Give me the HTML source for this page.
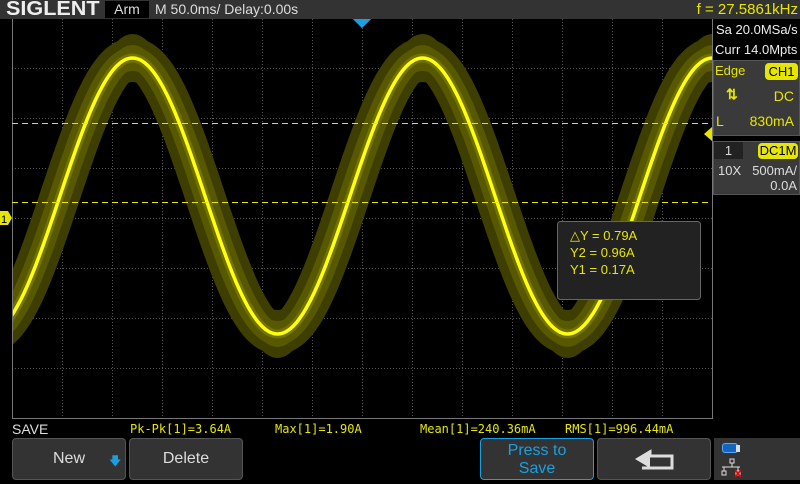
<!DOCTYPE html>
<html><head><meta charset="utf-8"><style>
*{margin:0;padding:0;box-sizing:border-box}
body{width:800px;height:480px;background:#000;overflow:hidden;position:relative;font-family:"Liberation Sans",sans-serif}
.a{position:absolute}
.top{left:0;top:0;width:800px;height:19px;background:#333}
.btn{position:absolute;top:438px;height:42px;background:#333;border:1px solid #555;border-radius:4px;color:#ddd;font-size:16px;text-align:center}
.y{color:#e6e600}
</style></head><body>
<div class="a top"></div>
<div class="a" style="left:6px;top:-2px;font-size:20px;font-weight:bold;color:#eee;line-height:22px;transform:scaleX(1.08);transform-origin:left">SIGLENT</div>
<div class="a" style="left:105px;top:1px;width:44px;height:17px;background:#000;color:#ddd;font-size:14px;text-align:center;line-height:17px">Arm</div>
<div class="a" style="left:155px;top:1px;color:#ddd;font-size:14px;line-height:17px">M 50.0ms/ Delay:0.00s</div>
<div class="a y" style="right:2px;top:0px;font-size:15px;line-height:19px">f = 27.5861kHz</div>
<svg class="a" style="left:0;top:0" width="800" height="480">
<g stroke="#555" stroke-width="1" stroke-dasharray="1,2" fill="none" id="grid"></g>
<path id="b1" fill="#3e3e00"/>
<path id="s1" fill="none" stroke="#3e3e00" stroke-width="40" stroke-linejoin="round"/>
<path id="b2" fill="#585800"/>
<path id="s2" fill="none" stroke="#585800" stroke-width="22" stroke-linejoin="round"/>
<path id="s3" fill="none" stroke="#727200" stroke-width="9" stroke-linejoin="round"/>
<path id="p4" fill="none" stroke="#ffff10" stroke-width="3.5" stroke-linejoin="round"/>
<rect x="0" y="0" width="12" height="420" fill="#000"/>
<rect x="713" y="19" width="87" height="400" fill="#000"/>
<rect x="0" y="0" width="800" height="19" fill="#333"/>
<rect x="0" y="419" width="713" height="20" fill="#000"/>
<line x1="12.5" y1="19" x2="12.5" y2="418" stroke="#777"/>
<line x1="12" y1="418.5" x2="713" y2="418.5" stroke="#777"/>
<line x1="712.5" y1="19" x2="712.5" y2="419" stroke="#777"/>
<line x1="12" y1="123.5" x2="712" y2="123.5" stroke="#ccc" stroke-dasharray="6,4"/>
<line x1="12" y1="202.5" x2="712" y2="202.5" stroke="#e6e600" stroke-dasharray="6,4"/>
<polygon points="353,19 371,19 362,28" fill="#1aa0e0"/>
<polygon points="0,211 8,211 12,218 8,225 0,225" fill="#e6e600"/>
<text x="1" y="223" font-size="11" fill="#000" font-family="Liberation Sans">1</text>
<polygon points="712,127 704,134 712,141" fill="#e6e600"/>
<rect x="557.5" y="221.5" width="143" height="78" rx="3" fill="#222" stroke="#666"/>
<text font-size="13" fill="#e6e600" font-family="Liberation Sans"><tspan x="570" y="240">△Y = 0.79A</tspan><tspan x="570" y="257">Y2 = 0.96A</tspan><tspan x="570" y="274">Y1 = 0.17A</tspan></text>
</svg>
<div class="a" style="left:6px;top:-2px;font-size:20px;font-weight:bold;color:#eee;line-height:22px;transform:scaleX(1.08);transform-origin:left">SIGLENT</div>
<div class="a" style="left:105px;top:1px;width:44px;height:17px;background:#000;color:#ddd;font-size:14px;text-align:center;line-height:17px">Arm</div>
<div class="a" style="left:155px;top:1px;color:#ddd;font-size:14px;line-height:17px">M 50.0ms/ Delay:0.00s</div>
<div class="a y" style="right:2px;top:0px;font-size:15px;line-height:19px">f = 27.5861kHz</div>
<svg class="a" style="left:353px;top:19px" width="18" height="9"><polygon points="0,0 18,0 9,9" fill="#1aa0e0"/></svg>
<div class="a" style="left:714px;top:20px;width:86px;height:20px;color:#eee;font-size:13px;line-height:20px;padding-left:2px">Sa 20.0MSa/s</div>
<div class="a" style="left:714px;top:40px;width:86px;height:20px;color:#eee;font-size:13px;line-height:20px;padding-left:1px">Curr 14.0Mpts</div>
<div class="a" style="left:713px;top:60px;width:87px;height:76px;background:#3a3a3a;border:1px solid #555"></div>
<div class="a y" style="left:715px;top:63px;font-size:13px">Edge</div>
<div class="a" style="left:765px;top:63px;width:33px;height:17px;background:#e6e600;border-radius:4px;font-size:13px;text-align:center;line-height:17px">CH1</div>
<div class="a y" style="left:726px;top:86px;font-size:14px;font-weight:bold">⇅</div>
<div class="a y" style="right:6px;top:88px;font-size:14px">DC</div>
<div class="a y" style="left:716px;top:113px;font-size:14px">L</div>
<div class="a y" style="right:6px;top:113px;font-size:14px">830mA</div>
<div class="a" style="left:713px;top:141px;width:87px;height:54px;background:#3a3a3a;border:1px solid #555"></div>
<div class="a" style="left:714px;top:142px;width:29px;height:17px;background:#222;color:#ddd;font-size:13px;text-align:center;line-height:17px">1</div>
<div class="a" style="left:758px;top:143px;width:40px;height:16px;background:#e6e600;border-radius:4px;font-size:13px;text-align:center;line-height:16px">DC1M</div>
<div class="a" style="left:718px;top:163px;color:#ddd;font-size:13px">10X</div>
<div class="a" style="right:3px;top:163px;color:#ddd;font-size:13px">500mA/</div>
<div class="a" style="right:3px;top:178px;color:#ddd;font-size:13px">0.0A</div>
<div class="a" style="left:12px;top:421px;color:#ddd;font-size:14px">SAVE</div>
<div class="a y" style="top:422px;font-size:12px;font-family:'DejaVu Sans Mono','Liberation Mono',monospace;left:130px">Pk-Pk[1]=3.64A</div>
<div class="a y" style="top:422px;font-size:12px;font-family:'DejaVu Sans Mono','Liberation Mono',monospace;left:275px">Max[1]=1.90A</div>
<div class="a y" style="top:422px;font-size:12px;font-family:'DejaVu Sans Mono','Liberation Mono',monospace;left:420px">Mean[1]=240.36mA</div>
<div class="a y" style="top:422px;font-size:12px;font-family:'DejaVu Sans Mono','Liberation Mono',monospace;left:565px">RMS[1]=996.44mA</div>
<div class="btn" style="left:12px;width:114px;line-height:40px">New<span style="position:absolute;left:96px;top:2px;color:#1aa0e0;font-size:12px">🡇</span></div>
<div class="btn" style="left:129px;width:114px;line-height:40px">Delete</div>
<div class="btn" style="left:480px;width:114px;border-color:#1aa0e0;color:#1aa0e0;line-height:18px;padding-top:3px">Press to<br>Save</div>
<div class="btn" style="left:597px;width:114px"><svg width="114" height="40"><path d="M42 20 L52 13 L52 17 L74 17 L74 29 L44 29" fill="none" stroke="#ddd" stroke-width="3"/><polygon points="37,20 52,11 52,29" fill="#ddd"/></svg></div>
<div class="a" style="left:714px;top:438px;width:86px;height:42px;background:#333"></div>
<div class="a" style="left:722px;top:443px;width:16px;height:10px;background:#1565c0;border:1px solid #5af;border-radius:3px"></div>
<div class="a" style="left:736px;top:445px;width:4px;height:7px;background:#ddd"></div>
<svg class="a" style="left:720px;top:458px" width="24" height="20"><path d="M10 1h4v4h-4zM12 5v4M2 9h18M4 9v4M18 9v4M2 13h4v4h-4zM16 13h4v4h-4z" fill="none" stroke="#ddd" stroke-width="1"/><path d="M15 12l6 7M21 12l-6 7" stroke="#e00" stroke-width="1.5"/></svg>
<script>
var g=document.getElementById('grid'),s='';
for(var x=62;x<712;x+=50)s+='<line x1="'+(x+.5)+'" y1="19" x2="'+(x+.5)+'" y2="418"/>';
for(var y=68;y<418;y+=50)s+='<line x1="12" y1="'+(y+.5)+'" x2="712" y2="'+(y+.5)+'"/>';
g.innerHTML=s;
function f(x){return 196-138*Math.sin(2*Math.PI*(x-60)/290);}
function line(){var d='';for(var x=-30;x<=740;x+=2)d+=(x>-30?'L':'M')+x+' '+f(x).toFixed(1);return d;}
function band(w){var d='',x;for(x=-30;x<=740;x+=2)d+=(x>-30?'L':'M')+x+' '+(f(x)-w).toFixed(1);for(x=740;x>=-30;x-=2)d+='L'+x+' '+(f(x)+w).toFixed(1);return d+'Z';}
var L=line();
document.getElementById('b1').setAttribute('d',band(24));
document.getElementById('b2').setAttribute('d',band(13));
['s1','s2','s3','p4'].forEach(function(i){document.getElementById(i).setAttribute('d',L)});
</script>
</body></html>
